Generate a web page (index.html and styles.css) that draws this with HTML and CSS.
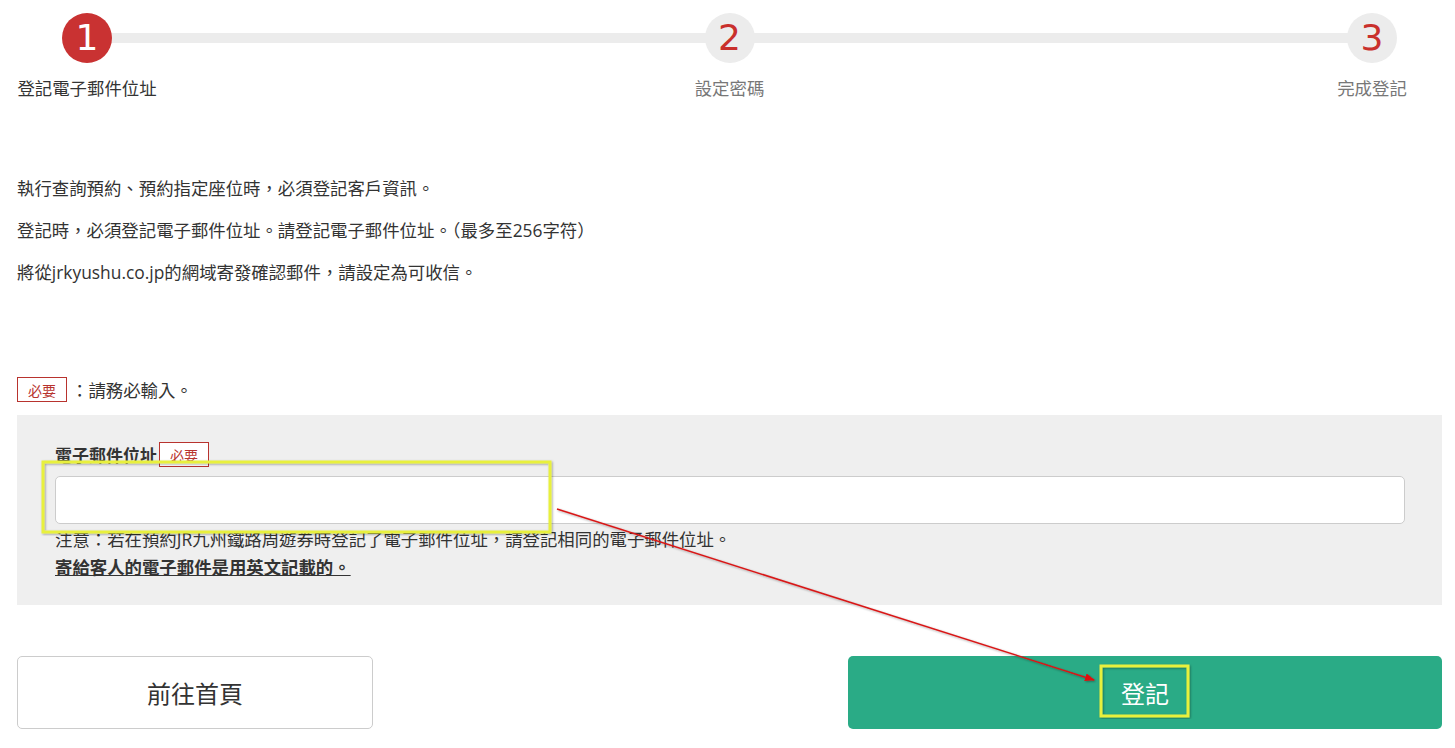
FILE: index.html
```html
<!DOCTYPE html>
<html lang="zh-Hant">
<head>
<meta charset="utf-8">
<title>登記電子郵件位址</title>
<link rel="stylesheet" href="styles.css">
</head>
<body>
<div class="page">
  <div class="stepper">
    <div class="step active">
      <div class="circle">1</div>
      <div class="step-label">登記電子郵件位址</div>
    </div>
    <div class="step">
      <div class="circle">2</div>
      <div class="step-label">設定密碼</div>
    </div>
    <div class="step">
      <div class="circle">3</div>
      <div class="step-label">完成登記</div>
    </div>
  </div>

  <div class="intro">
    <p>執行查詢預約、預約指定座位時，必須登記客戶資訊。</p>
    <p>登記時，必須登記電子郵件位址。請登記電子郵件位址。（最多至256字符）</p>
    <p>將從jrkyushu.co.jp的網域寄發確認郵件，請設定為可收信。</p>
  </div>

  <div class="legend">
    <span class="badge">必要</span>
    <span class="legend-text">：請務必輸入。</span>
  </div>

  <div class="form-box">
    <div class="field-label">
      <span class="label-text">電子郵件位址</span><span class="badge">必要</span>
    </div>
    <input class="text-input" type="text">
    <div class="note">
      <p>注意：若在預約JR九州鐵路周遊券時登記了電子郵件位址，請登記相同的電子郵件位址。</p>
      <p class="note-strong">寄給客人的電子郵件是用英文記載的。</p>
    </div>
  </div>

  <div class="actions">
    <button class="btn btn-home">前往首頁</button>
    <button class="btn btn-submit">登記</button>
  </div>
</div>

<svg class="annotations" width="1455" height="748" viewBox="0 0 1455 748">
  <defs>
    <filter id="sh" x="-5%" y="-5%" width="110%" height="110%">
      <feDropShadow dx="1" dy="1" stdDeviation="1.2" flood-color="#000" flood-opacity="0.35"/>
    </filter>
    <marker id="ah" markerWidth="10" markerHeight="8" refX="9" refY="4" orient="auto" markerUnits="userSpaceOnUse">
      <path d="M0,0 L10,4 L0,8 Z" fill="#e01010"/>
    </marker>
  </defs>
  <rect x="43" y="462" width="507" height="70" fill="none" stroke="#e8f03c" stroke-width="3" filter="url(#sh)"/>
  <rect x="1101" y="666" width="87" height="50" fill="none" stroke="#e8f03c" stroke-width="3" filter="url(#sh)"/>
  <line x1="557" y1="509" x2="1094" y2="680" stroke="#d81818" stroke-width="1.5" marker-end="url(#ah)" filter="url(#sh)"/>
</svg>
</body>
</html>
```

FILE: styles.css
```css
* { box-sizing: border-box; }

html, body {
  margin: 0;
  padding: 0;
  background: #fff;
}

body {
  font-family: "Open Sans", "Noto Sans CJK TC", sans-serif;
  font-size: 17.4px;
  color: #333;
  width: 1455px;
  height: 748px;
  overflow: hidden;
  position: relative;
}

.page {
  width: 1425px;
  margin-left: 17px;
}

/* Stepper */
.stepper {
  position: relative;
  display: flex;
  justify-content: space-between;
  padding-top: 13px;
}

.stepper::before {
  content: "";
  position: absolute;
  left: 70px;
  right: 70px;
  top: 33px;
  height: 10px;
  background: #ececec;
}

.step {
  position: relative;
  width: 140px;
  display: flex;
  flex-direction: column;
  align-items: center;
}

.circle {
  width: 50px;
  height: 50px;
  border-radius: 50%;
  background: #ececec;
  color: #c9302c;
  font-family: "DejaVu Sans", sans-serif;
  font-size: 36px;
  line-height: 50px;
  text-align: center;
}

.step.active .circle {
  background: #c93232;
  color: #fff;
}

.step-label {
  margin-top: 13px;
  line-height: 24px;
  white-space: nowrap;
  color: #777;
}

.step.active .step-label {
  color: #333;
}

/* Intro */
.intro {
  margin-top: 76px;
}

.intro p {
  margin: 0 0 18px;
  line-height: 24px;
}

/* Legend */
.legend {
  display: flex;
  align-items: center;
  margin-top: 93px;
  height: 25px;
}

.badge {
  display: inline-flex;
  align-items: center;
  justify-content: center;
  width: 50px;
  height: 25px;
  border: 1px solid #b8332e;
  color: #b8332e;
  font-size: 14px;
  background: #fff;
}

.legend-text {
  margin-left: 4px;
}

/* Form box */
.form-box {
  margin-top: 13px;
  background: #efefef;
  padding: 27px 37px 24px 38px;
}

.field-label {
  display: flex;
  align-items: flex-end;
  height: 25px;
}

.label-text {
  font-weight: bold;
  font-size: 17px;
  line-height: 22px;
}

.field-label .badge {
  margin-left: 2px;
}

.text-input {
  display: block;
  width: 100%;
  height: 48px;
  margin-top: 9px;
  border: 1px solid #ccc;
  border-radius: 5px;
  background: #fff;
  font-size: 17px;
  padding: 0 12px;
}

.note {
  margin-top: 1px;
}

.note p {
  margin: 0;
  line-height: 28px;
}

.note-strong {
  font-weight: bold;
  text-decoration: underline;
}

/* Actions */
.actions {
  display: flex;
  justify-content: space-between;
  margin-top: 51px;
}

.btn {
  height: 73px;
  border-radius: 5px;
  font-family: "Noto Sans CJK TC", sans-serif;
  font-size: 24px;
  cursor: pointer;
}

.btn-home {
  width: 356px;
  background: #fff;
  border: 1px solid #ccc;
  color: #333;
}

.btn-submit {
  width: 594px;
  background: #2aab86;
  border: none;
  color: #fff;
}

/* Annotation overlay */
.annotations {
  position: absolute;
  left: 0;
  top: 0;
  pointer-events: none;
}
```
